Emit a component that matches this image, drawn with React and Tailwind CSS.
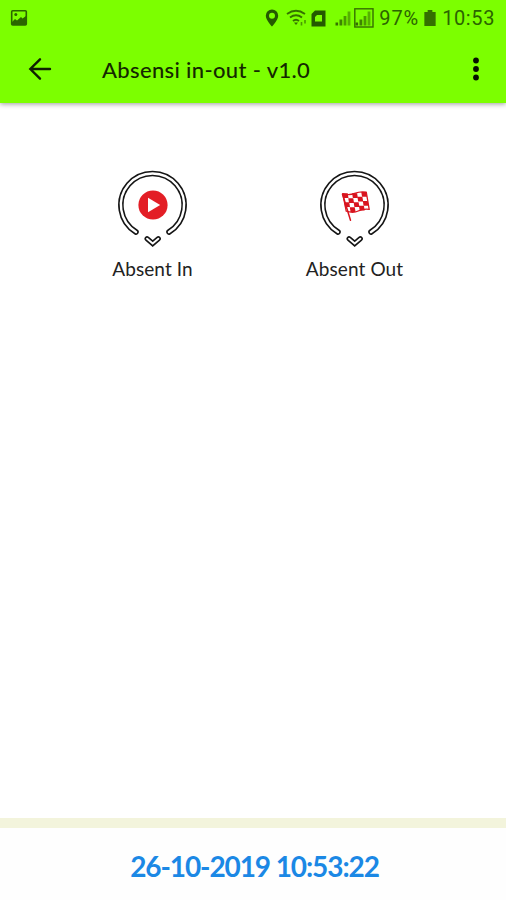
import { useState } from 'react';

const ACTIONS = [
  { id: 'in', label: 'Absent In', icon: PlayIcon },
  { id: 'out', label: 'Absent Out', icon: FlagIcon },
];

// red squares of the flag, row by row
const FLAG_CELLS = [
  [1, 0, 1, 0, 1],
  [0, 1, 0, 1, 0],
  [1, 0, 1, 0, 1],
  [0, 1, 0, 1, 0],
];
const FLAG_WAVE = [1, 1.6, 1, 0, -0.3];

function PlayIcon() {
  return (
    <g>
      <circle cx="36" cy="36" r="14.6" fill="#e31e26" />
      <path d="M31 28.8v14.4L43.2 36z" fill="#fff" />
    </g>
  );
}

function FlagIcon() {
  return (
    <g transform="translate(22.6 23.2)">
      <path d="M0.9 2L8.9 28" stroke="#d9141f" strokeWidth="1.5" strokeLinecap="round" />
      <g transform="matrix(1 0 0.17 1 0.9 0)">
        {FLAG_CELLS.map((row, y) => row.map((on, x) => (
          on ? <rect key={`${x}-${y}`} x={x * 4.7} y={y * 4.5 + FLAG_WAVE[x]} width="5" height="4.8" fill="#d9141f" /> : null
        )))}
        <path d="M0 1.4Q6 3.4 12 1.2T23.8 0V17.2Q18 16.4 12.5 18.8T0.5 19z" fill="none" stroke="#d9141f" strokeWidth="1.3" strokeLinejoin="round" />
      </g>
    </g>
  );
}

function ActionButton({ label, icon: Icon, onClick }) {
  return (
    <button onClick={onClick} className="flex w-[202px] flex-col items-center">
      <svg viewBox="0 0 72 80" className="h-20 w-[72px]" fill="none">
        <g strokeLinecap="round" strokeLinejoin="round">
          <path d="M19 63A31.6 31.6 0 1 1 52 63" stroke="#151515" strokeWidth="5.6" />
          <path d="M19 63A31.6 31.6 0 1 1 52 63" stroke="#fff" strokeWidth="2.4" />
          <path d="M30.1 69.7L35.7 74.5L41.3 69.7" stroke="#151515" strokeWidth="5.2" strokeLinejoin="miter" />
          <path d="M30.1 69.7L35.7 74.5L41.3 69.7" stroke="#fff" strokeWidth="2" strokeLinejoin="miter" />
        </g>
        <Icon />
      </svg>
      <span className="mt-1.5 text-[19px] leading-7 tracking-[0.1px] text-[#222]">{label}</span>
    </button>
  );
}

function SignalBars({ framed }) {
  return (
    <svg viewBox="0 0 20 20" className="h-5 w-5" fill="#347000">
      {framed && <rect x="0.8" y="0.8" width="18.2" height="18.2" fill="none" stroke="#347000" strokeWidth="1.4" />}
      <rect x="1.5" y="14.5" width="2.6" height="3" />
      <rect x="5.5" y="11.5" width="2.8" height="6" opacity="0.85" />
      <rect x="9.6" y="8" width="2.8" height="9.5" opacity="0.7" />
      <rect x="13.6" y="3.5" width="2.8" height="14" opacity="0.55" />
    </svg>
  );
}

function StatusBar() {
  return (
    <div className="flex h-9 items-center pl-[10px] pr-[11px] text-[#2b6500]">
      <svg viewBox="0 0 18 18" className="h-[18px] w-[18px]" fill="none">
        <rect x="1.7" y="1.7" width="14.6" height="14.2" rx="1" stroke="#2b6500" strokeWidth="1.6" />
        <path d="M2 13L5 10l2 1.5L11 8l1.5 1.5L16 7v9H2z" fill="#2b6500" />
        <circle cx="5.8" cy="5.6" r="1.5" fill="#2b6500" />
      </svg>
      <div className="ml-auto flex items-center">
        <svg viewBox="0 0 14 18" className="h-[18px] w-[14px]" fill="#245a00">
          <path fillRule="evenodd" d="M7 .5A6.2 6.2 0 0 0 .8 6.7C.8 11 7 17.4 7 17.4S13.2 11 13.2 6.7A6.2 6.2 0 0 0 7 .5zM7 3.7a3 3 0 1 1 0 6A3 3 0 0 1 7 3.7z" />
        </svg>
        <svg viewBox="0 0 21 18" className="ml-[7px] h-[18px] w-[21px]" fill="none" stroke="#347000" strokeWidth="1.9">
          <path d="M1 5Q10 -1.5 19 5M4 8.5Q10 4 16 8.5M7 12Q10 9.5 13 12" />
          <path d="M8 13.5h4L10 16z" fill="#347000" stroke="none" />
          <path d="M15.5 13v3.5M19 11v3.5" strokeWidth="1.6" opacity="0.7" />
        </svg>
        <svg viewBox="0 0 15 17" className="ml-[4px] h-[17px] w-[15px]">
          <path d="M4 .5h10.5v16H.5V4z" fill="#245a00" />
          <path d="M4 7l2-2h5v6.5H4z" fill="#7cff00" />
        </svg>
        <div className="ml-[8px] flex">
          <SignalBars />
          <SignalBars framed />
        </div>
        <span className="ml-[5px] font-['Roboto',sans-serif] text-[20px] leading-6 tracking-[0.9px]">97%</span>
        <svg viewBox="0 0 12 17" className="ml-[5px] h-4 w-3" fill="#347000">
          <path d="M3.5 0h5v2H12v15H0V2h3.5z" />
        </svg>
        <span className="ml-[6px] font-['Roboto',sans-serif] text-[20px] leading-6 tracking-[0.6px]">10:53</span>
      </div>
    </div>
  );
}

export default function App() {
  const [stamp] = useState('26-10-2019 10:53:22');

  return (
    <div className="flex h-[900px] w-[506px] flex-col overflow-hidden bg-white font-['Lato',sans-serif]">
      <header className="h-[103px] shrink-0 bg-[#7cff00] shadow-[0_1px_5px_rgba(0,0,0,0.4)]">
        <StatusBar />
        <div className="flex h-[65px] items-center pl-7 pr-[26px]">
          <button aria-label="Back">
            <svg viewBox="0 0 24 24" className="h-6 w-6" fill="none" stroke="#102000" strokeWidth="2.4" strokeLinecap="round">
              <path d="M22 12H2.5M12 2.3L2.3 12l9.7 9.7" />
            </svg>
          </button>
          <h1 className="ml-[50px] pt-[3px] text-[22px] font-medium leading-7 tracking-[0.35px] text-[#142800]">Absensi in-out - v1.0</h1>
          <button aria-label="More options" className="ml-auto">
            <svg viewBox="0 0 8 24" className="h-6 w-2" fill="#071000">
              <circle cx="4" cy="3.5" r="2.9" />
              <circle cx="4" cy="12" r="2.9" />
              <circle cx="4" cy="20.5" r="2.9" />
            </svg>
          </button>
        </div>
      </header>

      <main className="flex flex-1 items-start justify-center pl-px pt-[66px]">
        {ACTIONS.map((a) => (
          <ActionButton key={a.id} {...a} />
        ))}
      </main>

      <footer className="flex h-[82px] shrink-0 items-center justify-center border-t-[10px] border-[#f3f4dc] bg-[#fefefe] pl-[3px] pt-1">
        <span className="text-[28px] font-bold leading-8 tracking-[-1.1px] text-[#1b88e5]">{stamp}</span>
      </footer>
    </div>
  );
}
